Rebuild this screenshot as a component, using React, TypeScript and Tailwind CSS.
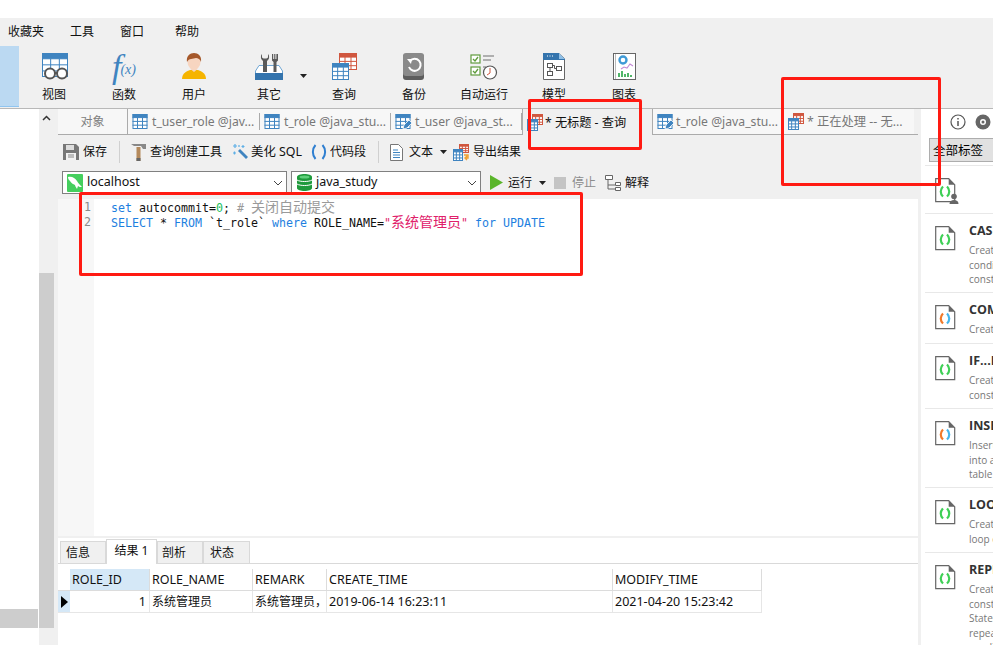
import React from "react";

const Grid = ({ x, y, w, h, c, rows = 3, cols = 3 }: { x: number; y: number; w: number; h: number; c: string; rows?: number; cols?: number }) => {
  const head = h * 0.24;
  const lines = [];
  for (let i = 1; i < cols; i++) lines.push(<line key={"c" + i} x1={x + (w * i) / cols} x2={x + (w * i) / cols} y1={y + head} y2={y + h} stroke={c} strokeWidth="1" />);
  for (let i = 0; i < rows; i++) {
    const yy = y + head + ((h - head) * i) / rows;
    lines.push(<line key={"r" + i} x1={x} x2={x + w} y1={yy} y2={yy} stroke={c} strokeWidth="1" />);
  }
  return (
    <g>
      <rect x={x + 0.5} y={y + 0.5} width={w - 1} height={h - 1} fill="#fff" stroke={c} strokeWidth="1" />
      <rect x={x} y={y} width={w} height={head} fill={c} />
      {lines}
    </g>
  );
};

const TableSm = ({ pencil }: { pencil?: boolean }) => (
  <svg width="17" height="17" viewBox="0 0 17 17" className="shrink-0">
    <Grid x={0.5} y={1} w={15} h={15} c="#3f84c0" />
    {pencil && (
      <g>
        <path d="M8 16l1-4 5-5 3 3-5 5z" fill="#3f84c0" stroke="#fff" strokeWidth="0.8" />
      </g>
    )}
  </svg>
);

const QuerySm = () => (
  <svg width="17" height="17" viewBox="0 0 17 17" className="shrink-0">
    <Grid x={5} y={0} w={11} h={11} c="#d0573f" />
    <Grid x={0} y={5} w={11} h={12} c="#3f84c0" />
  </svg>
);

const ViewIcon = () => (
  <svg width="28" height="27" viewBox="0 0 28 27" className="ml-[2px]">
    <Grid x={1} y={0} w={26} h={24} c="#3f84c0" />
    <circle cx="9" cy="20.5" r="5" fill="#fff" stroke="#555" strokeWidth="2" />
    <circle cx="21" cy="20.5" r="5" fill="#fff" stroke="#555" strokeWidth="2" />
    <path d="M14 20h2" stroke="#555" strokeWidth="2" />
  </svg>
);

const UserIcon = () => (
  <svg width="26" height="27" viewBox="0 0 26 27">
    <path d="M1 26c0-6 5-8 8-9h8c3 1 8 3 8 9z" fill="#f5b400" />
    <path d="M9.5 16l3.5 3 3.5-3v-2h-7z" fill="#f7d5c0" />
    <ellipse cx="13" cy="9" rx="6.5" ry="7.5" fill="#f7d5c0" />
    <path d="M6 9c-1-6 3-9 7-9s8 3 7 9c-1-3-3-4-5-4-3 1-7 0-9 4z" fill="#a5582a" />
  </svg>
);

const ToolsIcon = () => (
  <svg width="28" height="27" viewBox="0 0 28 27">
    <path d="M4 12.500L.5 18v3h27v-3L24 12.500z" fill="#fff" stroke="#6fa6d4" strokeWidth="1" />
    <path d="M7 1c-1.500 1.500-1.500 4.500 0 6l1 1v11h4V8l1-1c1.500-1.500 1.500-4.500 0-6v3.500l-1.500 1h-3L7 4.500z" fill="#5a5a5a" />
    <path d="M17 1h1.200v5h1V1h1.200v5h1V1H23v6.500l-1.500 1.500v10h-3V9L17 7.500z" fill="#5a5a5a" />
    <rect x="0" y="20" width="28" height="7" fill="#3474ad" />
  </svg>
);

const QueryIcon = () => (
  <svg width="28" height="27" viewBox="0 0 28 27" className="ml-[2px]">
    <Grid x={8} y={0} w={18} h={17} c="#d0573f" />
    <Grid x={1} y={10} w={17} h={17} c="#3f84c0" />
  </svg>
);

const BackupIcon = () => (
  <svg width="22" height="27" viewBox="0 0 22 27">
    <rect x="0" y="1" width="21" height="26" rx="3" fill="#5d5d5d" />
    <rect x="0" y="0" width="21" height="23" rx="3" fill="#8a8a8a" />
    <path d="M7 8a6 6 0 1 1-1 6" fill="none" stroke="#fff" strokeWidth="2" />
    <path d="M4 6l5 0-1 5z" fill="#fff" />
  </svg>
);

const AutoIcon = () => (
  <svg width="28" height="27" viewBox="0 0 28 27">
    <rect x="1" y="2" width="9" height="8" fill="#fff" stroke="#5f9b3c" strokeWidth="1.2" />
    <path d="M3 6l2 2 3-4" fill="none" stroke="#5f9b3c" strokeWidth="1.3" />
    <rect x="1" y="14" width="9" height="8" fill="#fff" stroke="#5f9b3c" strokeWidth="1.2" />
    <path d="M3 18l2 2 3-4" fill="none" stroke="#5f9b3c" strokeWidth="1.3" />
    <path d="M13 3h11M13 7h8M13 14h3" stroke="#999" strokeWidth="1.6" />
    <circle cx="20" cy="19.5" r="6.5" fill="#fff" stroke="#555" strokeWidth="1.2" />
    <path d="M20 15v5l-3 2" fill="none" stroke="#d0573f" strokeWidth="1" />
  </svg>
);

const ModelIcon = () => (
  <svg width="22" height="27" viewBox="0 0 22 27">
    <path d="M0.5 0.5H16l5.5 5v21H0.5z" fill="#fff" stroke="#666" />
    <path d="M0 0h16v6h6v1H0z" fill="#3474ad" />
    <path d="M16 0l6 6h-6z" fill="#8fc0e8" />
    <path d="M4 3h1M6.5 3h1M9 3h1" stroke="#fff" />
    <rect x="4.5" y="10.5" width="5" height="4" fill="none" stroke="#555" />
    <rect x="13.5" y="13.5" width="5" height="4" fill="none" stroke="#555" />
    <rect x="4.5" y="18.5" width="5" height="4" fill="none" stroke="#555" />
    <path d="M9.5 12.500h2v3h2M7 14.500v4" fill="none" stroke="#555" />
  </svg>
);

const ChartIcon = () => (
  <svg width="23" height="27" viewBox="0 0 23 27">
    <rect x="0.5" y="0.5" width="22" height="26" fill="#fff" stroke="#666" />
    <path d="M2.5 1v25" stroke="#bbb" />
    <circle cx="10" cy="7" r="3.5" fill="none" stroke="#3f9ad6" strokeWidth="2.4" />
    <path d="M8 16l3-2 3 1 3-4 3 2" fill="none" stroke="#c48ad6" strokeWidth="1.1" />
    <path d="M6 24v-4M9 24v-6M12 24v-3M15 24v-4M18 24v-2" stroke="#3fae5a" strokeWidth="1.8" />
  </svg>
);

const Fx = () => (
  <span className="font-['Liberation_Serif',serif] italic text-[#3f84c0] leading-none flex items-end h-[27px]">
    <span className="text-[34px] leading-[27px]">f</span>
    <span className="text-[14px] leading-[20px] -ml-[1px]">(x)</span>
  </span>
);

const SaveIcon = () => (
  <svg width="16" height="16" viewBox="0 0 16 16">
    <path d="M0 0h13l3 3v13H0z" fill="#777" />
    <rect x="3" y="1" width="8" height="5" fill="#ddd" />
    <rect x="3" y="9" width="10" height="7" fill="#f2f2f2" />
    <path d="M5 11h6M5 13h6" stroke="#888" />
  </svg>
);

const HammerIcon = () => (
  <svg width="15" height="17" viewBox="0 0 15 17">
    <path d="M0 0h15v5h-3L10 2H3z" fill="#888" />
    <path d="M5.5 3h4v14h-4z" fill="#b58a5c" />
    <path d="M5.5 14h4v3h-4z" fill="#666" />
  </svg>
);

const WandIcon = () => (
  <svg width="16" height="16" viewBox="0 0 16 16">
    <path d="M6 7l2-2 8 8-2 2z" fill="#3f84c0" />
    <path d="M3 0v4M1 2h4M11 1v3M9.5 2.5h3M1 9h3M2.5 7.5v3M7 1v2" stroke="#5fb0e6" strokeWidth="1.2" />
  </svg>
);

const ParenIcon = () => (
  <svg width="16" height="16" viewBox="0 0 16 16">
    <path d="M4.5 1C1 5 1 11 4.5 15" fill="none" stroke="#2f7fd0" strokeWidth="2" />
    <path d="M11.500 1c3.500 4 3.500 10 0 14" fill="none" stroke="#2f7fd0" strokeWidth="2" />
  </svg>
);

const DocIcon = () => (
  <svg width="13" height="17" viewBox="0 0 13 17">
    <path d="M0.500 0.500h8l4 4v12h-12z" fill="#fff" stroke="#777" />
    <path d="M3 6h5M3 8.500h7M3 11h7M3 13.500h7" stroke="#3f84c0" />
  </svg>
);

const ExportIcon = () => (
  <svg width="17" height="17" viewBox="0 0 17 17">
    <Grid x={6} y={0} w={10} h={9} c="#d0573f" />
    <Grid x={0} y={5} w={10} h={12} c="#3f84c0" />
    <path d="M11 11h4v3h-3M14 16l-2-2 2-2" fill="none" stroke="#f0a030" strokeWidth="1.4" />
  </svg>
);

const Dolphin = () => (
  <svg width="16" height="18" viewBox="0 0 16 18" className="shrink-0">
    <rect width="16" height="18" rx="1" fill="#45cf5e" />
    <path d="M1 3c4-1 7 1 9 4 1 2 3 4 5 6-2 0-3 0-4-1l-1 3c-1-2-2-3-2-4-2-1-4-2-5-4C2 6 1 5 1 3z" fill="#fff" />
  </svg>
);

const DbIcon = () => (
  <svg width="15" height="17" viewBox="0 0 15 17" className="shrink-0">
    <path d="M0 3c0-4 15-4 15 0v11c0 4-15 4-15 0z" fill="#1f9a3c" />
    <path d="M0 6c3 2 12 2 15 0M0 10c3 2 12 2 15 0" stroke="#fff" fill="none" />
    <ellipse cx="7.500" cy="3" rx="5" ry="1.500" fill="#5fd07a" />
  </svg>
);

const Chevron = () => (
  <svg width="10" height="6" viewBox="0 0 10 6" className="absolute right-[3px] top-[8px]">
    <path d="M1 1l4 4 4-4" fill="none" stroke="#444" strokeWidth="1" />
  </svg>
);

const Caret = () => (
  <svg width="7" height="4" viewBox="0 0 7 4" className="shrink-0">
    <path d="M0 0h7L3.500 4z" fill="#222" />
  </svg>
);

const ExplainIcon = () => (
  <svg width="16" height="16" viewBox="0 0 16 16">
    <path d="M.5.5h7v4h-7zM10.500 7.500h5v3h-5zM10.500 12.500h5v3h-5z" fill="#fff" stroke="#666" />
    <path d="M3 5v5h7M3 10v4h7" fill="none" stroke="#666" />
  </svg>
);

const FileIcon = ({ multi, user }: { multi?: boolean; user?: boolean }) => (
  <svg width="24" height="26" viewBox="0 0 24 26" className="shrink-0">
    <path d="M.7.700h13l6 6v17h-19z" fill="#fff" stroke="#666" strokeWidth="1.200" />
    <path d="M13.700.700l6 6h-6z" fill="#666" />
    <path d="M8 8.500c-3 3-3 7 0 10" fill="none" stroke={multi ? "#f0792a" : "#3ecf55"} strokeWidth="2.200" />
    <path d="M12 8.500c3 3 3 7 0 10" fill="none" stroke={multi ? "#45b5ec" : "#3ecf55"} strokeWidth="2.200" />
    {user && (
      <g fill="#666">
        <circle cx="19" cy="18.500" r="2.800" />
        <path d="M14.500 26c0-3 2-4 4.500-4s4.500 1 4.500 4z" />
      </g>
    )}
  </svg>
);

const tools = [
  { label: "视图", w: "w-[70px]", icon: <ViewIcon /> },
  { label: "函数", w: "w-[70px]", icon: <Fx /> },
  { label: "用户", w: "w-[70px]", icon: <UserIcon /> },
  { label: "其它", w: "w-[80px]", icon: <ToolsIcon />, caret: true },
  { label: "查询", w: "w-[70px]", icon: <QueryIcon /> },
  { label: "备份", w: "w-[70px]", icon: <BackupIcon /> },
  { label: "自动运行", w: "w-[70px]", icon: <AutoIcon /> },
  { label: "模型", w: "w-[70px]", icon: <ModelIcon /> },
  { label: "图表", w: "w-[70px]", icon: <ChartIcon /> },
];

const tabs = [
  { label: "t_user_role @jav...", w: "w-[132px]", icon: <TableSm /> },
  { label: "t_role @java_stu...", w: "w-[131px]", icon: <TableSm /> },
  { label: "t_user @java_st...", w: "w-[131px]", icon: <TableSm pencil /> },
];

const snippets = [
  { h: "h-[48px]", title: "", lines: [], user: true },
  { h: "h-[79px]", title: "CASE", lines: ["Create", "condi", "const"] },
  { h: "h-[51px]", title: "COMMENT", lines: ["Create"], multi: true },
  { h: "h-[65px]", title: "IF...ELSE", lines: ["Create", "const"] },
  { h: "h-[79px]", title: "INSERT", lines: ["Insert", "into a", "table"], multi: true },
  { h: "h-[65px]", title: "LOOP", lines: ["Create", "loop c"] },
  { h: "h-[93px]", title: "REPEAT", lines: ["Create", "const", "Stater", "repea", "condi"] },
];

const Th = ({ w, active, children }: { w: string; active?: boolean; children: React.ReactNode }) => (
  <div className={`${w} h-full shrink-0 border-r border-[#dcdcdc] pl-[2px] pt-[1px] flex items-center whitespace-nowrap overflow-hidden ${active ? "bg-[#d5e8f7]" : "bg-white"}`}>{children}</div>
);

export default function App() {
  return (
    <div className="relative w-[993px] h-[645px] overflow-hidden bg-white text-[12px] text-[#111] font-['Noto_Sans','Noto_Sans_CJK_SC',sans-serif]">
      <div className="h-[18px] bg-white" />

      <div className="h-[27px] bg-[#f0f0f0] flex items-center pt-[1px]">
        <span className="ml-[8px]">收藏夹</span>
        <span className="ml-[26px]">工具</span>
        <span className="ml-[26px]">窗口</span>
        <span className="ml-[31px]">帮助</span>
      </div>

      <div className="h-[64px] bg-[#f0f0f0] border-b border-[#b8b8b8] flex">
        <div className="w-[19px] h-[61px] mt-[1px] bg-[#bbd9f2] border-b border-[#90c5f0]" />
        {tools.map((t) => (
          <div key={t.label} className={`${t.w} relative flex flex-col items-center pt-[8px]`}>
            <div className="h-[27px] flex items-center justify-center">{t.icon}</div>
            <span className="mt-[6px] leading-[18px]">{t.label}</span>
            {t.caret && (
              <span className="absolute right-[2px] top-[29px]">
                <Caret />
              </span>
            )}
          </div>
        ))}
      </div>

      <div className="flex h-[536px]">
        <div className="w-[39px] shrink-0 flex flex-col justify-end pb-[17px] bg-white">
          <div className="h-[19px] bg-[#cdcdcd] mr-px" />
        </div>

        <div className="w-[19px] shrink-0 bg-[#f0f0f0] flex flex-col pb-[17px]">
          <div className="h-[164px] pt-[6px] pl-[3px] shrink-0">
            <svg width="9" height="6" viewBox="0 0 9 6">
              <path d="M1 5l3.500-3.500L8 5" fill="none" stroke="#333" strokeWidth="1.500" />
            </svg>
          </div>
          <div className="flex-1 w-[15px] bg-[#cdcdcd]" />
        </div>

        <div className="w-[860px] shrink-0 flex flex-col">
          <div className="h-[26px] flex shrink-0 bg-[#f0f0f0]">
            <div className="w-[70px] bg-[#f7f7f7] border-b border-[#ababab] border-r flex items-center justify-center text-[#808080] pt-[1px]">对象</div>
            {tabs.map((t) => (
              <div key={t.label} className={`${t.w} bg-[#f7f7f7] border-b border-[#ababab] flex items-center pl-[4px] gap-[3px] text-[#777] text-[12.2px] whitespace-nowrap relative`}>
                {t.icon}
                <span className="pt-[2px]">{t.label}</span>
                <span className="absolute right-0 top-[4px] h-[17px] w-px bg-[#aaa]" />
              </div>
            ))}
            <div className="w-[131px] border-x border-[#ababab] flex items-center pl-[4px] gap-[1px] text-[#111] text-[12.2px] whitespace-nowrap">
              <QuerySm />
              <span className="pt-[2px]">* 无标题 - 查询</span>
            </div>
            <div className="w-[131px] bg-[#f7f7f7] border-b border-[#ababab] flex items-center pl-[4px] gap-[2px] text-[#777] text-[12.2px] whitespace-nowrap relative">
              <TableSm pencil />
              <span className="pt-[2px]">t_role @java_stu...</span>
              <span className="absolute right-0 top-[4px] h-[17px] w-px bg-[#aaa]" />
            </div>
            <div className="w-[130px] bg-[#f7f7f7] border-b border-[#ababab] flex items-center pl-[4px] gap-[2px] text-[#777] text-[12.3px] whitespace-nowrap">
              <QuerySm />
              <span className="pt-[2px]">* 正在处理 -- 无...</span>
            </div>
            <div className="flex-1 border-b border-[#ababab]" />
          </div>

          <div className="h-[34px] bg-[#f0f0f0] flex items-center shrink-0 pl-[5px] whitespace-nowrap">
            <SaveIcon />
            <span className="ml-[4px]">保存</span>
            <span className="ml-[12px] w-px h-[22px] bg-[#d0d0d0]" />
            <span className="ml-[11px]"><HammerIcon /></span>
            <span className="ml-[4px]">查询创建工具</span>
            <span className="ml-[10px]"><WandIcon /></span>
            <span className="ml-[3px] text-[12.4px]">美化 SQL</span>
            <span className="ml-[9px]"><ParenIcon /></span>
            <span className="ml-[3px]">代码段</span>
            <span className="ml-[12px] w-px h-[22px] bg-[#d0d0d0]" />
            <span className="ml-[11px]"><DocIcon /></span>
            <span className="ml-[6px]">文本</span>
            <span className="ml-[7px]"><Caret /></span>
            <span className="ml-[6px]"><ExportIcon /></span>
            <span className="ml-[3px]">导出结果</span>
          </div>

          <div className="h-[30px] bg-[#f0f0f0] shrink-0 pt-[2px] pl-[4px] flex items-start whitespace-nowrap">
            <div className="relative w-[225px] h-[23px] bg-white border border-[#808080] flex items-center pl-[4px] gap-[4px] text-[12.5px]">
              <Dolphin />
              <span>localhost</span>
              <Chevron />
            </div>
            <div className="relative ml-[4px] w-[190px] h-[23px] bg-white border border-[#808080] flex items-center pl-[5px] gap-[4px] text-[12.5px]">
              <DbIcon />
              <span>java_study</span>
              <Chevron />
            </div>
            <div className="h-[23px] flex items-center ml-[9px]">
              <svg width="13" height="15" viewBox="0 0 13 15"><path d="M0 0l13 7.500L0 15z" fill="#5ab52a" /></svg>
              <span className="ml-[5px]">运行</span>
              <span className="ml-[7px]"><Caret /></span>
              <span className="ml-[8px] w-[12px] h-[12px] bg-[#c4c4c4]" />
              <span className="ml-[6px] text-[#8c8c8c]">停止</span>
              <span className="ml-[9px]"><ExplainIcon /></span>
              <span className="ml-[4px]">解释</span>
            </div>
          </div>

          <div className="h-[337px] shrink-0 flex bg-white font-['DejaVu_Sans_Mono','Noto_Sans_CJK_SC',monospace] text-[11.63px] leading-[15px]">
            <div className="w-[36px] bg-[#f7f7f7] text-[#8a8a8a] pt-[1px] pl-[26px] pr-0">
              <div>1</div>
              <div>2</div>
            </div>
            <div className="pl-[17px] pt-[1px] whitespace-pre">
              <div className="h-[15px]">
                <span className="text-[#1e7fe0]">set</span> autocommit=<span className="text-[#20c060]">0</span>; <span className="text-[#9a9a9a]"># <span className="text-[14px] leading-[15px]">关闭自动提交</span></span>
              </div>
              <div className="h-[15px]">
                <span className="text-[#1e7fe0]">SELECT</span> * <span className="text-[#1e7fe0]">FROM</span> `t_role` <span className="text-[#1e7fe0]">where</span> ROLE_NAME=<span className="text-[#e0206a]">"<span className="text-[14px] leading-[15px]">系统管理员</span>"</span> <span className="text-[#1e7fe0]">for</span> <span className="text-[#1e7fe0]">UPDATE</span>
              </div>
            </div>
          </div>

          <div className="h-[2px] bg-[#f0f0f0] shrink-0" />

          <div className="h-[26px] shrink-0 flex items-end border-b border-[#d9d9d9] pl-[2px] bg-white">
            <div className="w-[46px] h-[23px] mb-[-1px] bg-[#f0f0f0] border border-[#d9d9d9] flex items-center pl-[5px]">信息</div>
            <div className="relative z-10 w-[51px] h-[25px] mb-[-1px] bg-white border border-b-0 border-[#d9d9d9] flex items-center justify-center pb-[2px]">结果 1</div>
            <div className="w-[46px] h-[23px] mb-[-1px] bg-[#f0f0f0] border border-[#d9d9d9] flex items-center pl-[4px]">剖析</div>
            <div className="w-[47px] h-[23px] mb-[-1px] bg-[#f0f0f0] border border-[#d9d9d9] flex items-center pl-[6px]">状态</div>
          </div>

          <div className="flex-1 bg-white pt-[5px] text-[12.5px]">
            <div className="flex h-[22px] border-b border-[#dcdcdc] w-[704px]">
              <div className="w-[12px] shrink-0" />
              <Th w="w-[80px]" active>ROLE_ID</Th>
              <Th w="w-[103px]">ROLE_NAME</Th>
              <Th w="w-[74px]">REMARK</Th>
              <Th w="w-[286px]">CREATE_TIME</Th>
              <Th w="w-[149px]">MODIFY_TIME</Th>
            </div>
            <div className="flex h-[22px] border-b border-[#e6e6e6] w-[704px]">
              <div className="w-[12px] shrink-0 bg-[#d5e8f7] flex items-center pl-[3px]">
                <svg width="7" height="12" viewBox="0 0 7 12"><path d="M0 0l7 6-7 6z" fill="#000" /></svg>
              </div>
              <div className="w-[80px] shrink-0 border-r border-[#e6e6e6] text-right pr-[3px] leading-[21px]">1</div>
              <div className="w-[103px] shrink-0 border-r border-[#e6e6e6] pl-[2px] leading-[21px] text-[12px]">系统管理员</div>
              <div className="w-[74px] shrink-0 border-r border-[#e6e6e6] pl-[2px] leading-[21px] text-[12px] overflow-hidden whitespace-nowrap">系统管理员，</div>
              <div className="w-[286px] shrink-0 border-r border-[#e6e6e6] pl-[2px] leading-[21px]">2019-06-14 16:23:11</div>
              <div className="w-[149px] shrink-0 border-r border-[#e6e6e6] pl-[2px] leading-[21px]">2021-04-20 15:23:42</div>
            </div>
          </div>
        </div>

        <div className="w-[75px] shrink-0 border-l-[3px] border-[#f0f0f0] bg-white flex flex-col overflow-hidden">
          <div className="h-[25px] flex items-center shrink-0 pl-[29px] gap-[9px]">
            <svg width="16" height="16" viewBox="0 0 16 16" className="shrink-0">
              <circle cx="8" cy="8" r="7" fill="none" stroke="#555" strokeWidth="1.200" />
              <path d="M8 7v5M8 4v1.600" stroke="#555" strokeWidth="1.500" />
            </svg>
            <svg width="16" height="16" viewBox="0 0 16 16" className="shrink-0">
              <circle cx="8" cy="8" r="7.500" fill="#666" />
              <circle cx="8" cy="8" r="3" fill="#fff" />
              <circle cx="8" cy="8" r="1.500" fill="#666" />
            </svg>
          </div>
          <div className="ml-[8px] mt-[4px] w-[80px] h-[24px] shrink-0 bg-[#e1e1e1] border border-[#adadad] pl-[3px] pt-[2px] flex items-center text-[12.5px] text-black whitespace-nowrap">全部标签</div>
          <div className="mt-[3px] ml-[4px] w-[90px] font-['Open_Sans','Noto_Sans',sans-serif]">
            {snippets.map((s, i) => (
              <div key={i} className={`${s.h} border-t border-[#e8e8e8] flex pl-[10px] overflow-hidden`}>
                <div className="w-[34px] shrink-0 pt-[12px]">
                  <FileIcon multi={s.multi} user={s.user} />
                </div>
                {s.title && (
                  <div className="pt-[8px] whitespace-nowrap">
                    <div className="font-bold text-[12.5px] leading-[18px] text-[#333]">{s.title}</div>
                    <div className="mt-[3px] text-[10px] leading-[14.500px] text-[#777]">
                      {s.lines.map((l) => (
                        <div key={l}>{l}</div>
                      ))}
                    </div>
                  </div>
                )}
              </div>
            ))}
          </div>
        </div>
      </div>

      <div className="absolute left-[528px] top-[99px] w-[114px] h-[51px] border-[3px] border-[#ff1a12] rounded-[2px]" />
      <div className="absolute left-[781px] top-[77px] w-[160px] h-[109px] border-[3px] border-[#ff1a12] rounded-[2px]" />
      <div className="absolute left-[79px] top-[192px] w-[504px] h-[84px] border-[3px] border-[#ff1a12] rounded-[2px]" />
    </div>
  );
}
